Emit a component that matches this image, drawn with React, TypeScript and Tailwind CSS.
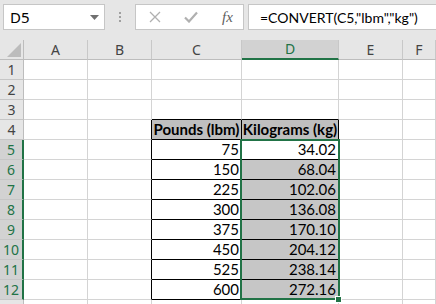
import React from 'react'

const COLS = ['A', 'B', 'C', 'D', 'E', 'F']
const WIDTHS = ['w-[64px]', 'w-[64px]', 'w-[90px]', 'w-[97px]', 'w-[64px]', 'flex-1']

const DATA: Record<number, [string, string]> = {
  4: ['Pounds (lbm)', 'Kilograms (kg)'],
  5: ['75', '34.02'],
  6: ['150', '68.04'],
  7: ['225', '102.06'],
  8: ['300', '136.08'],
  9: ['375', '170.10'],
  10: ['450', '204.12'],
  11: ['525', '238.14'],
  12: ['600', '272.16'],
}

const cellFont = { fontFamily: 'Lato, "Liberation Sans", sans-serif' }
const uiFont = { fontFamily: '"Noto Sans", "Open Sans", sans-serif' }

function Cell({ row, col }: { row: number; col: number }) {
  const inTable = row >= 4 && row <= 12 && (col === 2 || col === 3)
  const aboveTable = row === 3 && (col === 2 || col === 3)
  const leftOfTable = row >= 4 && row <= 12 && col === 1
  const header = row === 4 && inTable
  const shaded = col === 3 && row >= 6 && row <= 12

  let border = 'border-r border-b border-[#d4d4d4]'
  if (inTable) border = 'border-r border-b border-black'
  else if (aboveTable) border = 'border-r border-b border-r-[#d4d4d4] border-b-black'
  else if (leftOfTable) border = 'border-r border-b border-r-black border-b-[#d4d4d4]'

  let bg = 'bg-white'
  if (header) bg = 'bg-[#bfbfbf]'
  else if (shaded) bg = 'bg-[#c6c6c6]'

  const text = inTable ? DATA[row][col - 2] : ''

  return (
    <div
      className={`${WIDTHS[col]} h-[20px] shrink-0 ${border} ${bg} flex items-center ${
        header ? 'justify-center font-bold' : 'justify-end pr-[2px]'
      } text-[15px] leading-none text-black overflow-hidden whitespace-nowrap`}
      style={cellFont}
    >
      {text}
    </div>
  )
}

function RowHead({ row }: { row: number }) {
  const sel = row >= 5 && row <= 12
  return (
    <div
      className={`w-[24px] h-[20px] shrink-0 flex items-center justify-center text-[14px] leading-none border-b border-[#c6c6c6] ${
        sel
          ? 'bg-[#d2d2d2] text-[#217346] border-r-2 border-r-[#217346]'
          : 'bg-[#e6e6e6] text-[#444444] border-r border-r-[#bdbdbd]'
      }`}
      style={uiFont}
    >
      {row <= 12 ? row : ''}
    </div>
  )
}

export default function App() {
  const rows = Array.from({ length: 13 }, (_, i) => i + 1)

  return (
    <div className="w-[436px] h-[304px] overflow-hidden bg-[#e6e6e6] relative">
      {/* formula bar */}
      <div className="h-[40px] flex items-start pt-[4px] pl-[3px]">
        <div className="w-[102px] h-[26px] bg-white border border-[#c6c6c6] flex items-center justify-between pl-[6px] pr-[5px]">
          <span className="text-[15px] text-black" style={uiFont}>
            D5
          </span>
          <svg width="9" height="5" viewBox="0 0 9 5">
            <path d="M0 0H9L4.5 5Z" fill="#707070" />
          </svg>
        </div>
        <div className="w-[30px] h-[26px] flex flex-col items-center justify-center gap-[2px]">
          <span className="w-[2px] h-[2px] bg-[#a0a0a0]" />
          <span className="w-[2px] h-[2px] bg-[#a0a0a0]" />
          <span className="w-[2px] h-[2px] bg-[#a0a0a0]" />
        </div>
        <div className="w-[109px] h-[26px] bg-white border border-[#c6c6c6] flex items-center">
          <svg width="12" height="12" viewBox="0 0 12 12" className="ml-[13px]">
            <path d="M1 1L11 11M11 1L1 11" stroke="#b0b0b0" strokeWidth="1.3" />
          </svg>
          <svg width="14" height="12" viewBox="0 0 14 12" className="ml-[23px]">
            <path d="M1 6.5L5 10.5L13 1.5" stroke="#b0b0b0" strokeWidth="2.2" fill="none" />
          </svg>
          <span
            className="ml-[24px] text-[15px] italic text-[#606060] leading-none"
            style={{ fontFamily: '"Liberation Serif", serif' }}
          >
            fx
          </span>
        </div>
        <div className="ml-[4px] flex-1 h-[26px] bg-white border border-r-0 border-[#c6c6c6] flex items-center pl-[11px]">
          <span className="text-[14px] text-black whitespace-nowrap" style={cellFont}>
            =CONVERT(C5,"lbm","kg")
          </span>
        </div>
      </div>

      {/* column headers */}
      <div className="flex h-[20px]">
        <div className="w-[24px] h-[20px] shrink-0 border-r border-b border-[#bdbdbd] relative">
          <svg width="14" height="14" viewBox="0 0 14 14" className="absolute left-[7px] top-[3px]">
            <path d="M14 0V14H0Z" fill="#bcbcbc" />
          </svg>
        </div>
        {COLS.map((c, i) => (
          <div
            key={c}
            className={`${WIDTHS[i]} h-[20px] shrink-0 flex items-center justify-center text-[14px] leading-none border-r border-r-[#c8c8c8] ${
              c === 'D'
                ? 'bg-[#d2d2d2] text-[#217346] border-b-2 border-b-[#217346]'
                : 'bg-[#e6e6e6] text-[#444444] border-b border-b-[#bdbdbd]'
            }`}
            style={uiFont}
          >
            {c}
          </div>
        ))}
      </div>

      {/* grid */}
      {rows.map((r) => (
        <div key={r} className="flex h-[20px]">
          <RowHead row={r} />
          {COLS.map((c, i) => (
            <Cell key={c} row={r} col={i} />
          ))}
        </div>
      ))}

      {/* selection D5:D12 */}
      <div className="absolute left-[240px] top-[139px] w-[100px] h-[161px] border-2 border-[#217346] pointer-events-none" />
      <div className="absolute left-[335px] top-[296px] w-[7px] h-[7px] bg-[#217346] border border-white" />
    </div>
  )
}
